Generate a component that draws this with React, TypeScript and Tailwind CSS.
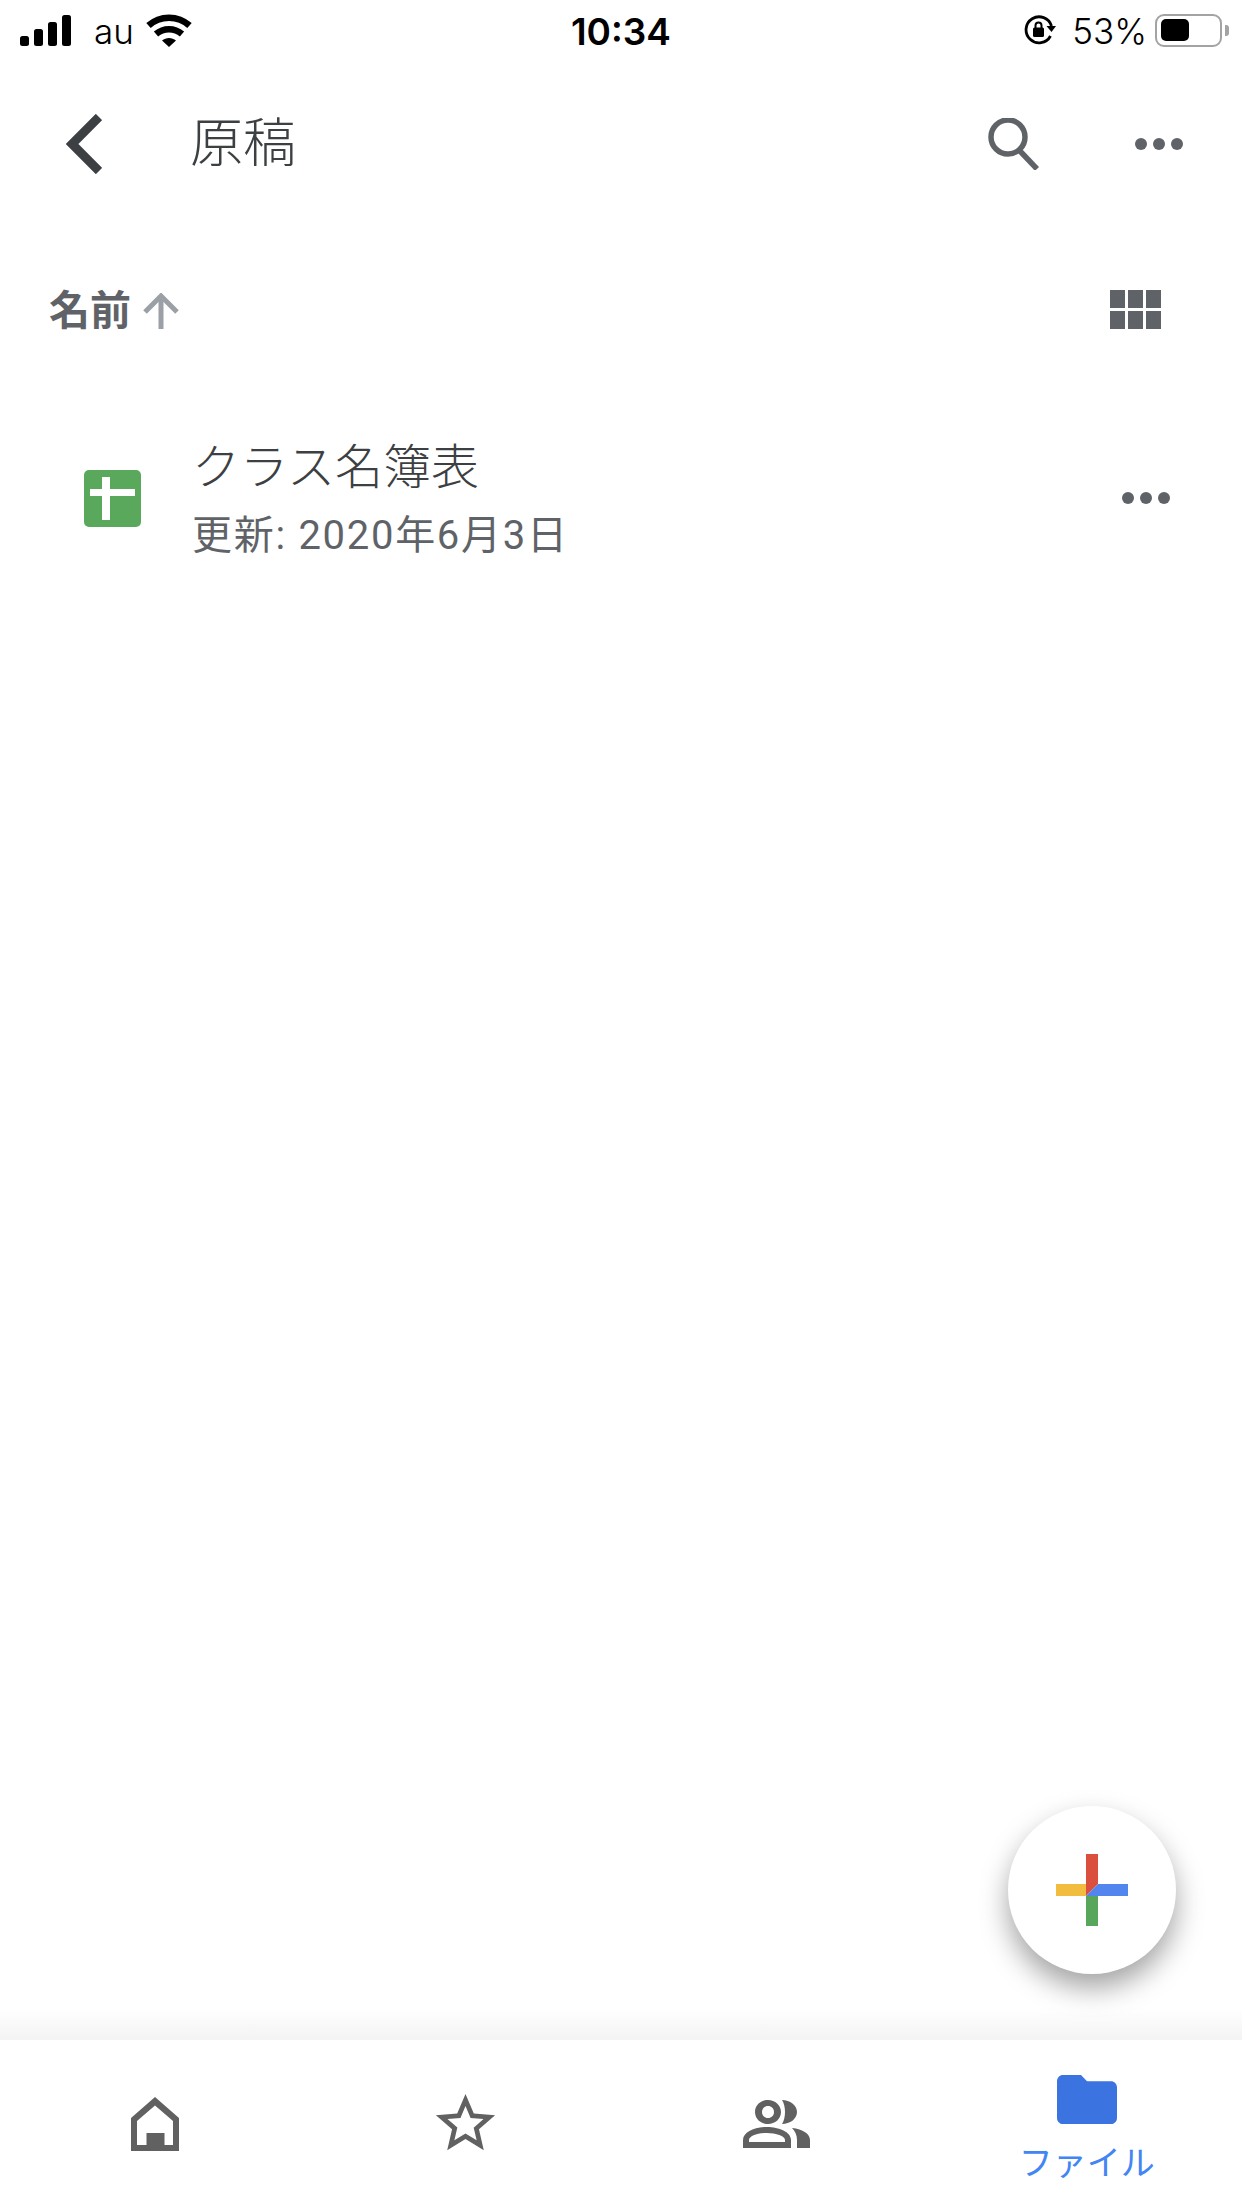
const jp = "font-['Roboto','Noto_Sans_CJK_JP',sans-serif]";

function ThreeDots() {
  return (
    <div className="flex gap-[6px]">
      <span className="size-[12px] rounded-full bg-[#5f6368]" />
      <span className="size-[12px] rounded-full bg-[#5f6368]" />
      <span className="size-[12px] rounded-full bg-[#5f6368]" />
    </div>
  );
}

function StatusBar() {
  return (
    <div className="grid h-[60px] w-full shrink-0 grid-cols-3 items-center font-['Inter',sans-serif] text-black">
      <div className="flex items-center pl-[20px]">
        <svg width="51" height="31" viewBox="0 0 51 31" fill="#000">
          <rect x="0" y="21" width="9" height="10" rx="2.5" />
          <rect x="14" y="14" width="9" height="17" rx="2.5" />
          <rect x="28" y="7" width="9" height="24" rx="2.5" />
          <rect x="42" y="0" width="9" height="31" rx="2.5" />
        </svg>
        <span className="ml-[23px] pt-[2px] text-[35px] font-light leading-none">au</span>
        <svg className="ml-[12px]" width="46" height="33" viewBox="0 0 46 33" fill="none" stroke="#000" strokeWidth="6.5">
          <path d="M2.5 11.5C14 1 32 1 43.5 11.5" />
          <path d="M10 20C17.500 13.500 28.500 13.500 36 20" />
          <path d="M16 26.500L23 33L30 26.500C26 23 20 23 16 26.500Z" fill="#000" stroke="none" />
        </svg>
      </div>
      <div className="pt-[2px] text-center text-[37px] font-semibold leading-none">10:34</div>
      <div className="flex items-center justify-end pr-[20px]">
        <svg width="32" height="30" viewBox="0 0 32 30" fill="none">
          <path d="M26.500 21A13 13 0 1 1 27.500 11" stroke="#000" strokeWidth="2.800" />
          <path d="M22.500 11H32L27.500 17Z" fill="#000" />
          <rect x="9" y="12.500" width="11" height="9.500" rx="1.500" fill="#000" />
          <path d="M11.500 13V10.500A3 3 0 0 1 17.500 10.500V13" stroke="#000" strokeWidth="2" />
        </svg>
        <span className="ml-[16px] pt-[2px] text-[35px] font-light leading-none">53%</span>
        <div className="relative ml-[8px] flex h-[33px] w-[67px] items-center rounded-[9px] border-[2.500px] border-[#a3a3a3] pl-[4px]">
          <div className="h-[22px] w-[28px] rounded-[5px] bg-black" />
          <span className="absolute right-[-9px] h-[11px] w-[4px] rounded-r-[3px] bg-[#a3a3a3]" />
        </div>
      </div>
    </div>
  );
}

function Header() {
  return (
    <div className="flex h-[168px] w-full shrink-0 items-center pl-[66px] pr-[59px]">
      <svg width="36" height="60" viewBox="0 0 36 60" fill="none" stroke="#3c4043" strokeWidth="9">
        <path d="M33 3L6 30L33 57" />
      </svg>
      <h1 className={`ml-[88px] text-[53px] font-light leading-none text-[#3c4043] ${jp}`}>原稿</h1>
      <svg className="ml-auto" width="52" height="52" viewBox="0 0 52 52" fill="none" stroke="#5f6368" strokeWidth="5.500">
        <circle cx="20" cy="19" r="17" />
        <path d="M31 32L49 51" />
      </svg>
      <div className="ml-[95px]">
        <ThreeDots />
      </div>
    </div>
  );
}

function SortRow() {
  return (
    <div className="flex h-[166px] w-full shrink-0 items-center pl-[49px] pr-[81px]">
      <span className={`text-[41px] font-bold leading-none text-[#5f6368] ${jp}`}>名前</span>
      <svg className="ml-[12px]" width="36" height="36" viewBox="0 0 36 36" fill="none" stroke="#9aa0a6" strokeWidth="5">
        <path d="M18 36V3" />
        <path d="M2 19L18 3L34 19" />
      </svg>
      <div className="mb-[3px] ml-auto grid grid-cols-[15px_15px_15px] gap-[3px]">
        {[0, 1, 2, 3, 4, 5].map((i) => (
          <span key={i} className="h-[18px] bg-[#5f6368]" />
        ))}
      </div>
    </div>
  );
}

function FileRow() {
  return (
    <div className="flex h-[208px] w-full shrink-0 items-center pl-[84px] pr-[72px]">
      <svg width="57" height="57" viewBox="0 0 57 57">
        <rect width="57" height="57" rx="5" fill="#5aa85c" />
        <rect x="6" y="19" width="45" height="7" fill="#fff" />
        <rect x="18" y="7" width="8" height="43" fill="#fff" />
      </svg>
      <div className={`ml-[51px] flex flex-col gap-[18px] pt-[4px] ${jp}`}>
        <span className="text-[48px] font-light leading-[54px] text-[#3c4043]">クラス名簿表</span>
        <span className="text-[40px] font-normal tracking-[1.7px] leading-[46px] text-[#5f6368]">更新: 2020年6月3日</span>
      </div>
      <div className="ml-auto">
        <ThreeDots />
      </div>
    </div>
  );
}

function Fab() {
  return (
    <button className="absolute bottom-[66px] right-[66px] flex size-[168px] items-center justify-center rounded-full bg-white shadow-[0_14px_28px_rgba(0,0,0,0.36)]">
      <svg width="72" height="72" viewBox="0 0 72 72">
        <path d="M30 0H42V30L30 42Z" fill="#db4f3f" />
        <path d="M0 30H30V42H0Z" fill="#f2bc3f" />
        <path d="M42 30H72V42H30Z" fill="#5385ee" />
        <path d="M30 42H42V72H30Z" fill="#58a65c" />
      </svg>
    </button>
  );
}

function TabBar() {
  return (
    <div className="grid h-[168px] w-full shrink-0 grid-cols-4 bg-white">
      <div className="flex justify-center pt-[57px]">
        <svg width="48" height="54" viewBox="0 0 48 54" fill="#616161">
          <path fillRule="evenodd" d="M24 0L48 21V54H0V21ZM24 8.500L6 24V48H15.500V36H33.500V48H42V24Z" />
        </svg>
      </div>
      <div className="flex justify-center pt-[48px]">
        <svg width="71" height="71" viewBox="0 0 24 24" fill="#616161">
          <path d="M22 9.240l-7.190-.620L12 2 9.190 8.630 2 9.240l5.460 4.730L5.820 21 12 17.270 18.180 21l-1.630-7.030L22 9.240zM12 15.400l-3.760 2.270 1-4.280-3.320-2.880 4.380-.380L12 6.100l1.710 4.040 4.380.380-3.320 2.880 1 4.280L12 15.400z" />
        </svg>
      </div>
      <div className="flex justify-center pt-[60px]">
        <svg width="67" height="48" viewBox="0 0 67 48" fill="#616161">
          <path fillRule="evenodd" d="M25 0C32 0 38 5 38 12C38 19 32 24 25 24C18 24 12 19 12 12C12 5 18 0 25 0ZM25 6C21.500 6 19 8.500 19 12C19 15.500 21.500 18 25 18C28.500 18 31 15.500 31 12C31 8.500 28.500 6 25 6Z" />
          <path d="M39 0C47 0 54 5 54 12C54 19 47 24 39 24C43 18 43 6 39 0Z" />
          <path fillRule="evenodd" d="M0 48V40C0 32 12 27 24 27C36 27 48 32 48 40V48ZM6 42H42V40C42 36 33 33 24 33C15 33 6 36 6 40Z" />
          <path d="M49 28C60 29 67 34 67 40V48H54V40C54 35 52 31 49 28Z" />
        </svg>
      </div>
      <div className="flex flex-col items-center pt-[35px]">
        <svg width="60" height="49" viewBox="2 4 20 16" preserveAspectRatio="none" fill="#3b73e0">
          <path d="M10 4H4c-1.100 0-1.990.900-1.990 2L2 18c0 1.100.900 2 2 2h16c1.100 0 2-.900 2-2V8c0-1.100-.900-2-2-2h-8l-2-2z" />
        </svg>
        <span className={`mt-[20px] text-[34px] font-normal leading-[38px] text-[#4285f4] ${jp}`}>ファイル</span>
      </div>
    </div>
  );
}

export default function App() {
  return (
    <div className="flex h-[2208px] w-[1242px] flex-col overflow-hidden bg-white">
      <StatusBar />
      <Header />
      <SortRow />
      <FileRow />
      <div className="relative flex-1">
        <div className="absolute bottom-0 left-0 h-[32px] w-full bg-linear-to-b from-white to-[#f3f3f3]" />
        <Fab />
      </div>
      <TabBar />
    </div>
  );
}
